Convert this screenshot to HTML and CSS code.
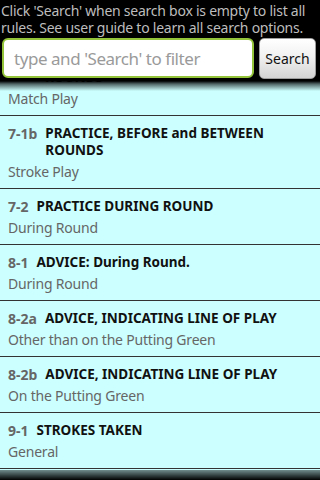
FILE: index.html
```html
<!DOCTYPE html>
<html>
<head>
<meta charset="utf-8">
<link rel="stylesheet" href="styles.css">
</head>
<body>
<div class="screen">
  <header class="header">
    <p class="hint">Click 'Search' when search box is empty to list all rules. See user guide to learn all search options.</p>
    <div class="search-row">
      <input class="search-input" type="text" placeholder="type and 'Search' to filter">
      <button class="search-btn">Search</button>
    </div>
  </header>
  <div class="list-wrap">
    <ul class="list">
      <li class="item first">
        <div class="title"><span class="num">7-1a</span><span class="name">PRACTICE, BEFORE and BETWEEN ROUNDS</span></div>
        <div class="sub">Match Play</div>
      </li>
      <li class="item">
        <div class="title"><span class="num">7-1b</span><span class="name">PRACTICE, BEFORE and BETWEEN ROUNDS</span></div>
        <div class="sub">Stroke Play</div>
      </li>
      <li class="item">
        <div class="title"><span class="num">7-2</span><span class="name">PRACTICE DURING ROUND</span></div>
        <div class="sub">During Round</div>
      </li>
      <li class="item">
        <div class="title"><span class="num">8-1</span><span class="name">ADVICE: During Round.</span></div>
        <div class="sub">During Round</div>
      </li>
      <li class="item">
        <div class="title"><span class="num">8-2a</span><span class="name">ADVICE, INDICATING LINE OF PLAY</span></div>
        <div class="sub">Other than on the Putting Green</div>
      </li>
      <li class="item">
        <div class="title"><span class="num">8-2b</span><span class="name">ADVICE, INDICATING LINE OF PLAY</span></div>
        <div class="sub">On the Putting Green</div>
      </li>
      <li class="item">
        <div class="title"><span class="num">9-1</span><span class="name">STROKES TAKEN</span></div>
        <div class="sub">General</div>
      </li>
      <li class="item">
        <div class="title"><span class="num">9-2</span><span class="name">INFORMATION AS TO STROKES TAKEN</span></div>
        <div class="sub">Match Play</div>
      </li>
    </ul>
    <div class="fade fade-top"></div>
    <div class="fade fade-bottom"></div>
  </div>
</div>
</body>
</html>
```
FILE: styles.css
```css
* { box-sizing: border-box; }
html, body {
  margin: 0;
  padding: 0;
  background: #000;
}
body {
  font-family: "Noto Sans", "Open Sans", "DejaVu Sans", sans-serif;
}
.screen {
  width: 320px;
  height: 480px;
  display: flex;
  flex-direction: column;
  background: #000;
  overflow: hidden;
}
.header {
  padding: 2px 0 0 0;
  flex: none;
}
.hint {
  margin: 0 0 0 1px;
  color: #bdbdbd;
  font-size: 14px;
  letter-spacing: -0.25px;
  line-height: 17px;
}
.search-row {
  display: flex;
  align-items: flex-start;
  gap: 5px;
  margin-top: 2px;
  padding: 0 4px 0 2px;
}
.search-input {
  width: 252px;
  height: 40px;
  border: 2px solid #93c43a;
  border-radius: 6px;
  background: #fff;
  padding: 0 10px;
  font-family: inherit;
  font-size: 17px;
  letter-spacing: -0.45px;
  color: #000;
  outline: none;
}
.search-input::placeholder {
  color: #9a9a9a;
}
.search-btn {
  width: 58px;
  height: 41px;
  border: 1px solid #9e9e9e;
  border-radius: 5px;
  background: linear-gradient(#ffffff, #f1f1f1 45%, #d4d4d4);
  font-family: inherit;
  font-size: 14px;
  color: #111;
  padding: 0;
}
.list-wrap {
  position: relative;
  flex: 1;
  margin-top: 2px;
  background: #ccffff;
  overflow: hidden;
}
.list {
  list-style: none;
  margin: 0;
  padding: 0;
}
.item {
  padding: 9px 8px 6px 8px;
  border-bottom: 1px solid #333;
}
.item.first {
  margin-top: -38px;
}
.title {
  display: flex;
  font-weight: bold;
  font-size: 13.5px;
  line-height: 17px;
  margin-bottom: 3px;
}
.num {
  color: #666;
  flex: none;
  margin-right: 8px;
  font-size: 14px;
}
.name {
  color: #111;
}
.sub {
  color: #666;
  font-size: 14px;
  letter-spacing: -0.2px;
  line-height: 20px;
}
.fade {
  position: absolute;
  left: 0;
  right: 0;
  height: 10px;
  pointer-events: none;
}
.fade-top {
  top: 0;
  background: linear-gradient(#000, rgba(0,0,0,0.6) 30%, rgba(0,0,0,0));
}
.fade-bottom {
  bottom: 0;
  background: linear-gradient(rgba(0,0,0,0.45), #000);
}
```
